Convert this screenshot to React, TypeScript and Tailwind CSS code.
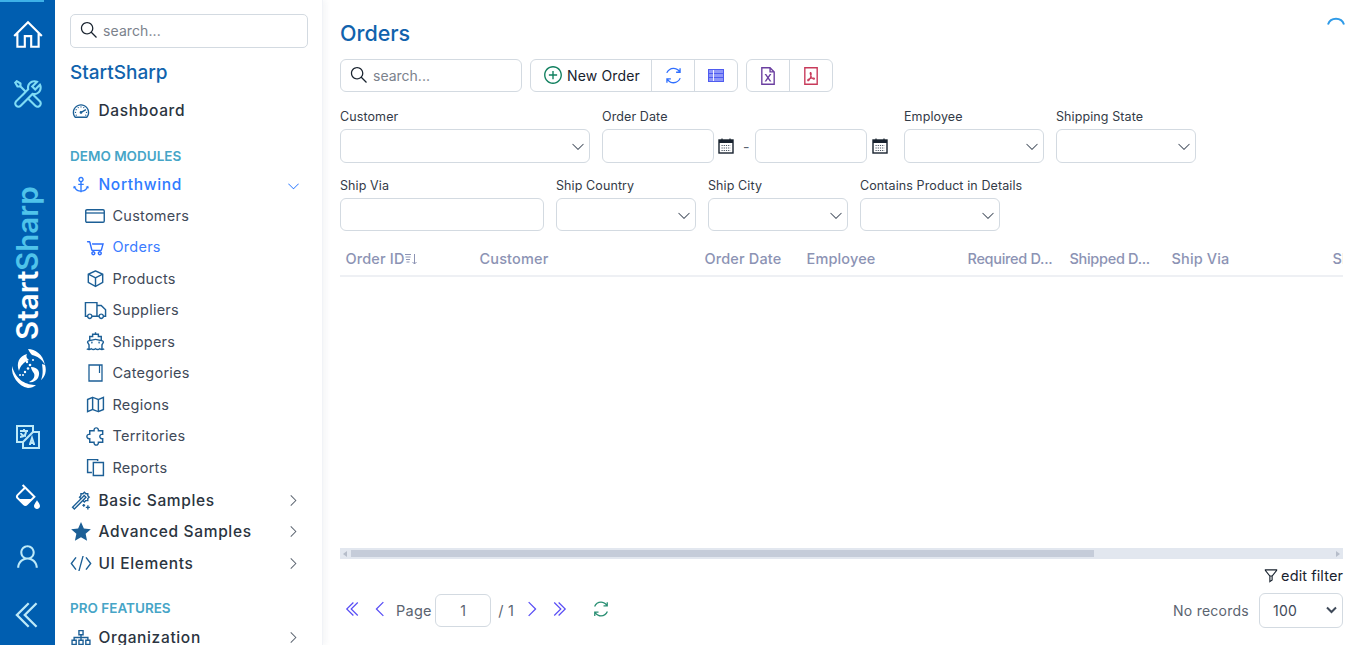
import React from "react";
import {
  LiaHomeSolid, LiaToolsSolid, LiaLanguageSolid, LiaFillDripSolid, LiaUser, LiaAngleDoubleLeftSolid, LiaAngleDoubleRightSolid,
  LiaAngleLeftSolid, LiaAngleRightSolid, LiaAngleDownSolid, LiaTachometerAltSolid, LiaAnchorSolid,
  LiaShoppingCartSolid, LiaCubeSolid, LiaTruckSolid, LiaShipSolid, LiaMap, LiaPuzzlePieceSolid, LiaCopy,
  LiaMagicSolid, LiaStarSolid, LiaCodeSolid, LiaSitemapSolid, LiaSearchSolid, LiaPlusCircleSolid, LiaSyncSolid,
  LiaFileExcel, LiaFilePdf, LiaFilterSolid,
} from "react-icons/lia";

const font = "font-['Inter','Liberation_Sans',sans-serif]";

function WindowIcon() {
  return (
    <svg width="20" height="14" viewBox="0 0 20 14">
      <rect x="0.75" y="0.75" width="18.5" height="12.5" rx="1.2" fill="none" stroke="currentColor" strokeWidth="1.4" />
      <path d="M1 4h18" stroke="currentColor" strokeWidth="1.3" />
    </svg>
  );
}

function NoteIcon() {
  return (
    <svg width="15" height="18" viewBox="0 0 15 18">
      <path d="M1 1h13v16H1z" fill="none" stroke="currentColor" strokeWidth="1.3" />
      <path d="M11.5 1v8" stroke="currentColor" strokeWidth="1.2" />
    </svg>
  );
}

function SubItem({ Icon, label, active, custom }: { Icon: any; label: string; active?: boolean; custom?: boolean }) {
  return (
    <div className={`flex h-[31.5px] items-center pl-[13px] text-[14.5px] tracking-[0.25px] ${active ? "text-[#3b7cff]" : "text-[#3f4a59]"}`}>
      <span className={`mr-[5.5px] flex w-[24px] justify-center ${active ? "text-[#2f6fff]" : "text-[#1c5f96]"}`}>
        {custom ? <Icon /> : <Icon size={23} />}
      </span>
      {label}
    </div>
  );
}

function TopItem({ Icon, label }: { Icon: any; label: string }) {
  return (
    <div className="flex h-[31.5px] items-center text-[15.5px] font-[450] tracking-[0.65px] text-[#2b3440]">
      <span className="mr-[6.5px] flex w-[22px] justify-center text-[#1c5f96]">
        <Icon size={23} />
      </span>
      <span className="flex-1">{label}</span>
      <LiaAngleRightSolid size={15} className="mr-[7px] text-[#5b6470]" />
    </div>
  );
}

function Field({ label, w, h = "h-[34px]", select, cls = "" }: { label: string; w: string; h?: string; select?: boolean; cls?: string }) {
  return (
    <div className={`flex flex-col ${w} ${cls}`}>
      <div className="h-[21px] whitespace-nowrap text-[12.5px] leading-[17px] tracking-[0.1px] text-[#333b47]">{label}</div>
      <div className={`flex items-center justify-end rounded-[6px] border border-[#d3dae1] pr-[4px] ${h}`}>
        {select && <LiaAngleDownSolid size={14} className="text-[#3f4a59]" />}
      </div>
    </div>
  );
}

function Cal() {
  return (
    <svg width="16" height="16" viewBox="0 0 16 16" className="shrink-0">
      <rect x="1" y="2" width="14" height="13" fill="#fff" stroke="#18222e" strokeWidth="1.4" />
      <rect x="1" y="2" width="14" height="3" fill="#18222e" />
      <path d="M4 0.5v3M12 0.5v3" stroke="#18222e" strokeWidth="1.2" />
      <path d="M3.5 7.5h9M3.5 10h9M3.5 12.5h9" stroke="#4a5563" strokeWidth="1.1" strokeDasharray="1.2 1" />
    </svg>
  );
}

function Col({ w, label, right, tight }: { w: string; label: string; right?: React.ReactNode; tight?: boolean }) {
  return (
    <div className={`flex shrink-0 items-center overflow-hidden whitespace-nowrap pl-[5.5px] text-[14.5px] font-medium text-[#8c93b4] ${tight ? "tracking-[-0.3px]" : "tracking-[0.15px]"} ${w}`}>
      {label}
      {right}
    </div>
  );
}

export default function App() {
  return (
    <div className={`flex h-[645px] w-[1360px] overflow-hidden bg-white ${font}`}>
      <div className="flex w-[55px] shrink-0 flex-col items-center bg-[#005eb0]">
        <div className="h-[2px] w-[44px] self-start bg-[#3db1e8]" />
        <LiaHomeSolid size={34} className="mt-[16px] text-white" />
        <LiaToolsSolid size={34} className="mt-[25px] text-[#7fdcf5]" />
        <div className="mt-[76px] flex h-[153px] rotate-180 items-center justify-center text-[29.5px] font-semibold leading-none [writing-mode:vertical-rl]">
          <span className="text-white">Start</span>
          <span className="text-[#4fc3ea]">Sharp</span>
        </div>
        <svg width="46" height="46" viewBox="0 0 46 46" className="mt-[5px]" fill="#fff">
          <path d="M23 4C30 4 38 9 40 20 37 14 32 11 27 10 25 8 24 6 23 4Z" />
          <path d="M40 20C42 26 40 32 36 35 38 30 38 26 37 19Z" />
          <path d="M7 21C6 31 13 41 23 43 26 43 29 42 31 40 22 40 11 36 7 21Z" />
          <path d="M22 9C14 11 11 18 14 26 15 21 19 17 24 15 21 13 21 11 22 9Z" />
          <path d="M26 22C33 22 36 27 33 33 31 36 27 38 24 37 29 35 31 30 28 27 27 25 26 24 26 22Z" />
          <circle cx="22" cy="17" r="1.2" />
          <circle cx="25" cy="20" r="1.3" />
          <circle cx="23" cy="23.5" r="1.3" />
          <circle cx="20" cy="27" r="1.2" />
          <circle cx="15" cy="30" r="1" />
          <circle cx="18" cy="30" r="1" />
          <circle cx="28" cy="15" r="1" />
        </svg>
        <LiaLanguageSolid size={32} className="mt-[30px] text-[#bdeaf8]" />
        <LiaFillDripSolid size={32} className="mt-[28px] text-white" />
        <LiaUser size={33} className="mt-[27px] text-[#bdeaf8]" />
        <LiaAngleDoubleLeftSolid size={36} className="mt-[24px] text-[#bdeaf8]" />
      </div>

      <div className="h-full w-[268px] shrink-0 overflow-hidden border-r border-[#f1f3f7] px-[15px] pt-[14px] shadow-[3px_0_6px_rgba(30,50,90,0.05)]">
        <div className="flex h-[34px] w-[238px] items-center rounded-[5px] border border-[#d3dae1] pb-[2px] pl-[8px] text-[14px] text-[#7b828c]">
          <LiaSearchSolid size={20} className="mr-[4px] -scale-x-100 text-[#18222e]" />
          <span className="tracking-[0.1px]">search...</span>
        </div>
        <div className="mt-[13px] text-[19px] font-medium leading-[24px] text-[#1163ad]">StartSharp</div>
        <div className="mt-[10px] flex h-[32px] items-center text-[15.5px] font-[450] tracking-[0.65px] text-[#2b3440]">
          <span className="mr-[6.5px] flex w-[22px] justify-center text-[#1c5f96]">
            <LiaTachometerAltSolid size={22} />
          </span>
          Dashboard
        </div>
        <div className="mt-[20px] text-[13.5px] font-semibold leading-[18px] text-[#46a5c7]">DEMO MODULES</div>
        <div className="mt-[8px] flex h-[24px] items-center text-[15.5px] font-[450] tracking-[0.65px] text-[#2f7bff]">
          <span className="mr-[6.5px] flex w-[22px] justify-center">
            <LiaAnchorSolid size={22} />
          </span>
          <span className="flex-1">Northwind</span>
          <LiaAngleDownSolid size={13} className="mr-[7.5px]" />
        </div>
        <div className="mb-[1px] mt-[3px]">
          <SubItem Icon={WindowIcon} custom label="Customers" />
          <SubItem Icon={LiaShoppingCartSolid} label="Orders" active />
          <SubItem Icon={LiaCubeSolid} label="Products" />
          <SubItem Icon={LiaTruckSolid} label="Suppliers" />
          <SubItem Icon={LiaShipSolid} label="Shippers" />
          <SubItem Icon={NoteIcon} custom label="Categories" />
          <SubItem Icon={LiaMap} label="Regions" />
          <SubItem Icon={LiaPuzzlePieceSolid} label="Territories" />
          <SubItem Icon={LiaCopy} label="Reports" />
        </div>
        <TopItem Icon={LiaMagicSolid} label="Basic Samples" />
        <TopItem Icon={LiaStarSolid} label="Advanced Samples" />
        <TopItem Icon={LiaCodeSolid} label="UI Elements" />
        <div className="mt-[20px] text-[13.5px] font-semibold leading-[18px] text-[#46a5c7]">PRO FEATURES</div>
        <div className="mt-[5px]">
          <TopItem Icon={LiaSitemapSolid} label="Organization" />
        </div>
      </div>

      <div className="relative min-w-0 flex-1 pl-[17px] pr-[17px]">
        <svg width="20" height="12" viewBox="0 0 20 12" className="absolute right-[14px] top-[14px]">
          <path d="M2 10.5A8.5 8.5 0 0 1 18 10.5" fill="none" stroke="#2f9be8" strokeWidth="2" />
        </svg>
        <div className="pt-[19px] text-[21.5px] font-medium leading-[28px] text-[#1163ad]">Orders</div>
        <div className="mt-[12px] flex h-[33px]">
          <div className="flex w-[182px] items-center rounded-[6px] border border-[#d3dae1] pb-[1px] pl-[8px] text-[14px] text-[#7b828c]">
            <LiaSearchSolid size={20} className="mr-[4px] -scale-x-100 text-[#18222e]" />
            search...
          </div>
          <div className="ml-[8px] flex rounded-[6px] border border-[#d3dae1]">
            <div className="flex w-[121px] items-center border-r border-[#d3dae1] pb-[1px] pl-[11px] text-[14px] tracking-[0.15px] text-[#18222e]">
              <LiaPlusCircleSolid size={22} className="mr-[3px] text-[#11805f]" />
              New Order
            </div>
            <div className="flex w-[43px] items-center justify-center border-r border-[#d3dae1]">
              <LiaSyncSolid size={21} className="text-[#2f6fff]" />
            </div>
            <div className="flex w-[42px] items-center justify-center">
              <svg width="16" height="13" viewBox="0 0 16 13">
                <rect x="0.5" y="0.5" width="15" height="12" fill="#8f97f8" stroke="#4f5cf0" />
                <path d="M0 4.5h16M0 8.5h16" stroke="#4f5cf0" strokeWidth="1.2" />
                <path d="M5.5 1v11" stroke="#fff" strokeWidth="0.9" />
              </svg>
            </div>
          </div>
          <div className="ml-[8px] flex rounded-[6px] border border-[#d3dae1]">
            <div className="flex w-[43px] items-center justify-center border-r border-[#d3dae1]">
              <LiaFileExcel size={22} className="text-[#6b3fa0]" />
            </div>
            <div className="flex w-[42px] items-center justify-center">
              <LiaFilePdf size={22} className="text-[#c83a5a]" />
            </div>
          </div>
        </div>

        <div className="mt-[16px] flex">
          <Field label="Customer" w="w-[250px]" select />
          <div className="ml-[12px] flex w-[290px] flex-col">
            <div className="h-[21px] text-[12.5px] leading-[17px] tracking-[0.1px] text-[#333b47]">Order Date</div>
            <div className="flex items-center">
              <div className="h-[34px] w-[112px] rounded-[6px] border border-[#d3dae1]" />
              <span className="ml-[4px]"><Cal /></span>
              <span className="ml-[9px] w-[12px] text-[14px] text-[#5b6470]">-</span>
              <div className="h-[34px] w-[112px] rounded-[6px] border border-[#d3dae1]" />
              <span className="ml-[5px]"><Cal /></span>
            </div>
          </div>
          <Field label="Employee" w="w-[140px]" select cls="ml-[12px]" />
          <Field label="Shipping State" w="w-[140px]" select cls="ml-[12px]" />
        </div>
        <div className="mt-[14px] flex">
          <Field label="Ship Via" w="w-[204px]" h="h-[33px]" />
          <Field label="Ship Country" w="w-[140px]" h="h-[33px]" select cls="ml-[12px]" />
          <Field label="Ship City" w="w-[140px]" h="h-[33px]" select cls="ml-[12px]" />
          <Field label="Contains Product in Details" w="w-[140px]" h="h-[33px]" select cls="ml-[12px]" />
        </div>

        <div className="mt-[11px] flex h-[35px] overflow-hidden border-b-2 border-[#eef0f4]">
          <Col
            w="w-[134px]"
            label="Order ID"
            right={
              <svg width="14" height="14" viewBox="0 0 14 14" className="-ml-[1px] text-[#8c93b4]">
                <path d="M1 2.5h6M1.5 5h5M2 7.5h4M2.5 10h3" stroke="currentColor" strokeWidth="1" />
                <path d="M10.5 2v10M8.5 10l2 2 2-2" stroke="currentColor" strokeWidth="1" fill="none" />
              </svg>
            }
          />
          <Col w="w-[225px]" label="Customer" />
          <Col w="w-[102px]" label="Order Date" />
          <Col w="w-[161px]" label="Employee" />
          <Col w="w-[102px]" label="Required D..." tight />
          <Col w="w-[102px]" label="Shipped D..." tight />
          <Col w="w-[161px]" label="Ship Via" />
          <Col w="w-[50px]" label="Ship" />
        </div>

        <div className="mt-[271px] flex h-[11px] items-center justify-between bg-[#e2e7ef] pl-[3px] pr-[3px]">
          <div className="flex items-center">
            <div className="h-0 w-0 border-y-[3px] border-r-[4px] border-y-transparent border-r-[#b6bdca]" />
            <div className="ml-[4px] h-[7px] w-[743px] bg-[#c5ccd9]" />
          </div>
          <div className="h-0 w-0 border-y-[3px] border-l-[4px] border-y-transparent border-l-[#b6bdca]" />
        </div>
        <div className="mt-[9px] flex h-[15px] items-center justify-end text-[14.5px] tracking-[0.1px] text-[#18222e]">
          <LiaFilterSolid size={18} className="mr-[1px]" />
          edit filter
        </div>
        <div className="mt-[10px] flex h-[35px] items-center text-[14px] tracking-[0.25px] text-[#5b6470]">
          <LiaAngleDoubleLeftSolid size={20} className="mb-[4px] ml-[3px] text-[#5a4ff5]" />
          <LiaAngleLeftSolid size={20} className="mb-[4px] ml-[8px] text-[#5a4ff5]" />
          <span className="ml-[5px] text-[14.5px]">Page</span>
          <div className="ml-[3.5px] flex h-[33px] w-[56px] items-center justify-center rounded-[6px] border border-[#d3dae1]">1</div>
          <span className="ml-[7px] text-[14.5px]">/ 1</span>
          <LiaAngleRightSolid size={20} className="mb-[4px] ml-[7px] text-[#5a4ff5]" />
          <LiaAngleDoubleRightSolid size={20} className="mb-[4px] ml-[8px] text-[#5a4ff5]" />
          <LiaSyncSolid size={20} className="mb-[4px] ml-[22px] text-[#2a8f73]" />
          <span className="ml-auto pb-[1px]">No records</span>
          <div className="ml-[10px] flex h-[35px] w-[84px] items-center justify-between rounded-[6px] border border-[#d3dae1] pb-[1px] pl-[13px] pr-[5px] text-[#3f4a59]">
            100
            <svg width="11" height="8" viewBox="0 0 11 8"><path d="M1 1.5l4.5 4.5 4.5-4.5" fill="none" stroke="#3f4a59" strokeWidth="2" /></svg>
          </div>
        </div>
      </div>
    </div>
  );
}
